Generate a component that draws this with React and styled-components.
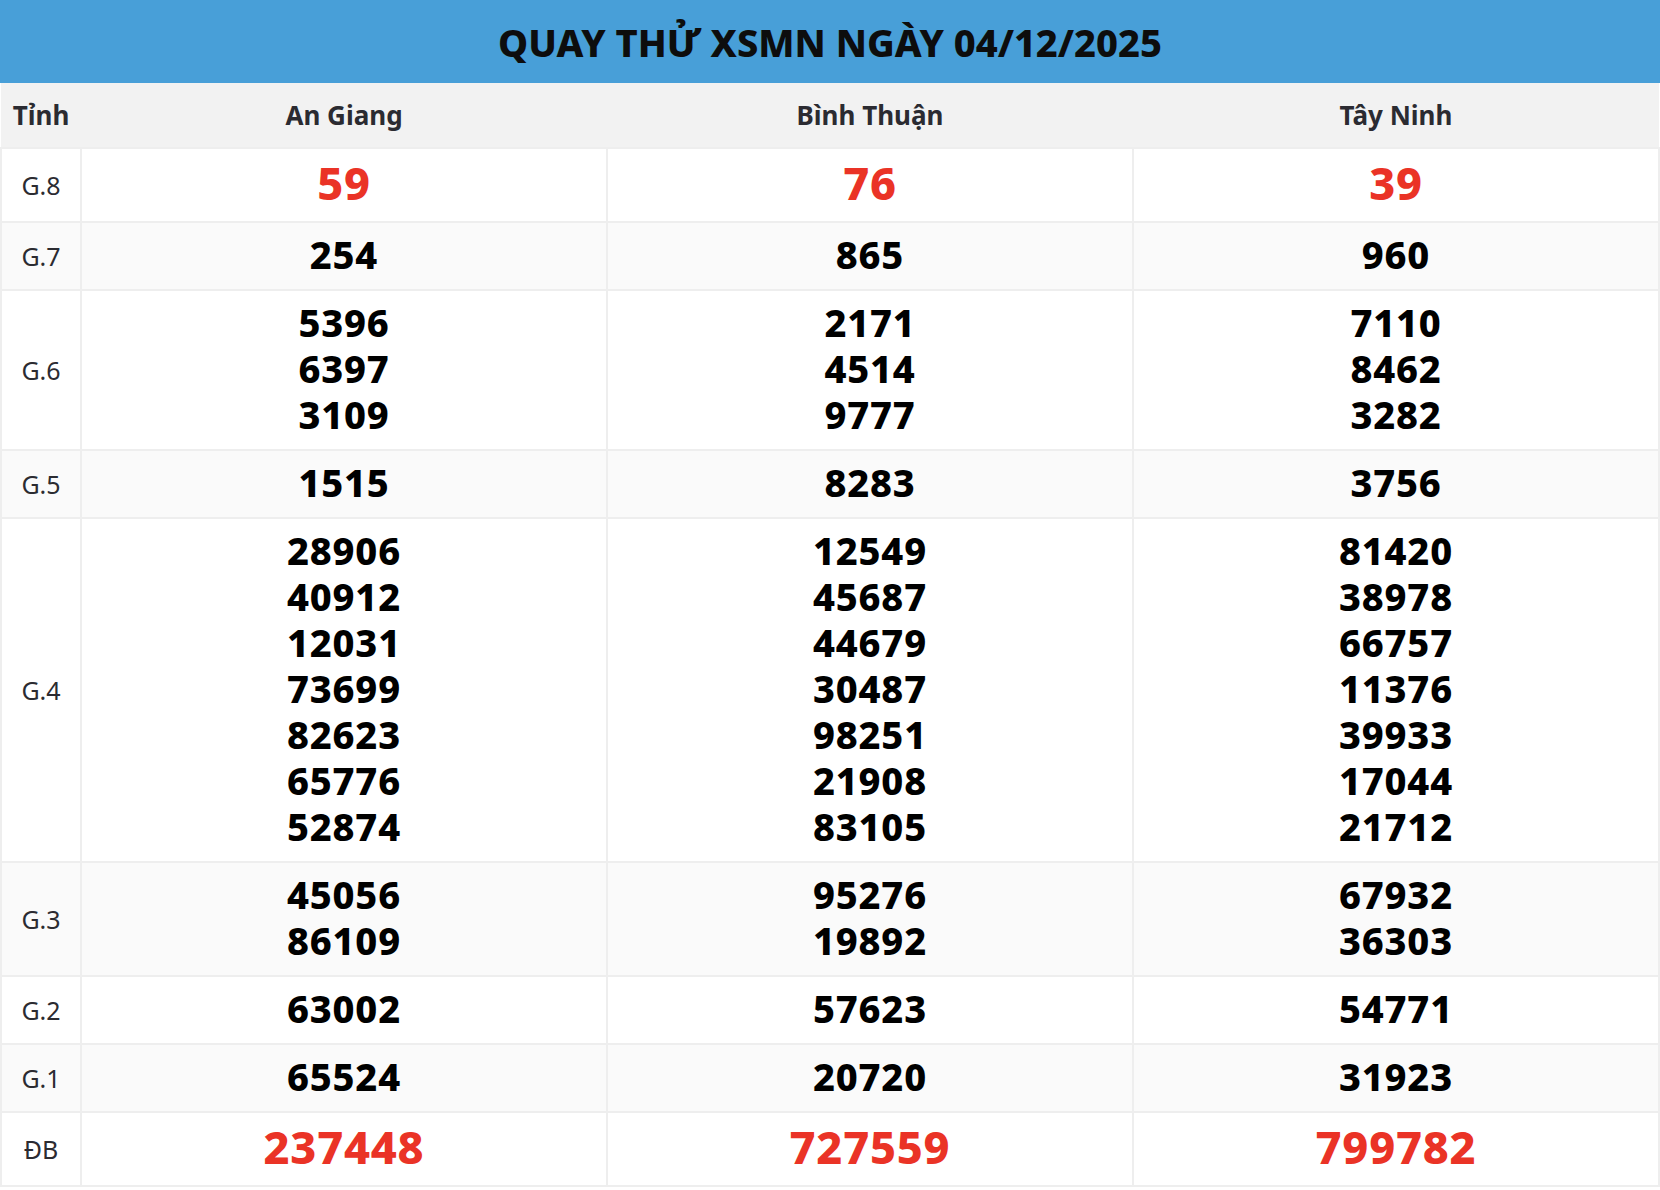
import React from 'react'
import styled, { createGlobalStyle } from 'styled-components'

const GlobalStyle = createGlobalStyle`
  body {
    margin: 0;
    background: #ffffff;
    font-family: "Noto Sans", "Open Sans", sans-serif;
  }
`

const Wrapper = styled.div`
  width: 1660px;
`

const TitleBar = styled.div`
  height: 83px;
  background: #489fd8;
  display: flex;
  align-items: center;
  justify-content: center;
  font-size: 38px;
  font-weight: 800;
  color: #0d0d0d;
`

const Table = styled.table`
  width: 100%;
  border-collapse: collapse;
  table-layout: fixed;
`

const HeadRow = styled.tr`
  background: #f2f2f2;
  height: 65px;
`

const HeadCell = styled.th`
  font-size: 26px;
  font-weight: 700;
  color: #2b2b31;
  text-align: center;
  padding: 0;
  width: ${p => p.$w || 'auto'};
`

const Row = styled.tr`
  background: ${p => (p.$alt ? '#fafafa' : '#ffffff')};
`

const Label = styled.td`
  border: 2px solid #eeeeee;
  text-align: center;
  font-size: 25px;
  color: #2b2b31;
  padding: 0;
`

const Cell = styled.td`
  border: 2px solid #eeeeee;
  text-align: center;
  padding: 8px 8px 12px;
  vertical-align: middle;
`

const Num = styled.div`
  font-size: ${p => (p.$red ? '45px' : '38px')};
  line-height: ${p => (p.$red ? '52px' : '46px')};
  letter-spacing: 0.8px;
  font-weight: 800;
  color: ${p => (p.$red ? '#ea3326' : '#000000')};
`

const provinces = ['An Giang', 'Bình Thuận', 'Tây Ninh']

const prizes = [
  { label: 'G.8', red: true, values: [['59'], ['76'], ['39']] },
  { label: 'G.7', values: [['254'], ['865'], ['960']] },
  {
    label: 'G.6',
    values: [
      ['5396', '6397', '3109'],
      ['2171', '4514', '9777'],
      ['7110', '8462', '3282']
    ]
  },
  { label: 'G.5', values: [['1515'], ['8283'], ['3756']] },
  {
    label: 'G.4',
    values: [
      ['28906', '40912', '12031', '73699', '82623', '65776', '52874'],
      ['12549', '45687', '44679', '30487', '98251', '21908', '83105'],
      ['81420', '38978', '66757', '11376', '39933', '17044', '21712']
    ]
  },
  {
    label: 'G.3',
    values: [
      ['45056', '86109'],
      ['95276', '19892'],
      ['67932', '36303']
    ]
  },
  { label: 'G.2', values: [['63002'], ['57623'], ['54771']] },
  { label: 'G.1', values: [['65524'], ['20720'], ['31923']] },
  { label: 'ĐB', red: true, values: [['237448'], ['727559'], ['799782']] }
]

export default function App() {
  return (
    <Wrapper>
      <GlobalStyle />
      <TitleBar>QUAY THỬ XSMN NGÀY 04/12/2025</TitleBar>
      <Table>
        <thead>
          <HeadRow>
            <HeadCell $w="80px">Tỉnh</HeadCell>
            {provinces.map(p => (
              <HeadCell key={p}>{p}</HeadCell>
            ))}
          </HeadRow>
        </thead>
        <tbody>
          {prizes.map((prize, i) => (
            <Row key={prize.label} $alt={i % 2 === 1}>
              <Label>{prize.label}</Label>
              {prize.values.map((list, j) => (
                <Cell key={j}>
                  {list.map((n, k) => (
                    <Num key={k} $red={prize.red}>
                      {n}
                    </Num>
                  ))}
                </Cell>
              ))}
            </Row>
          ))}
        </tbody>
      </Table>
    </Wrapper>
  )
}
